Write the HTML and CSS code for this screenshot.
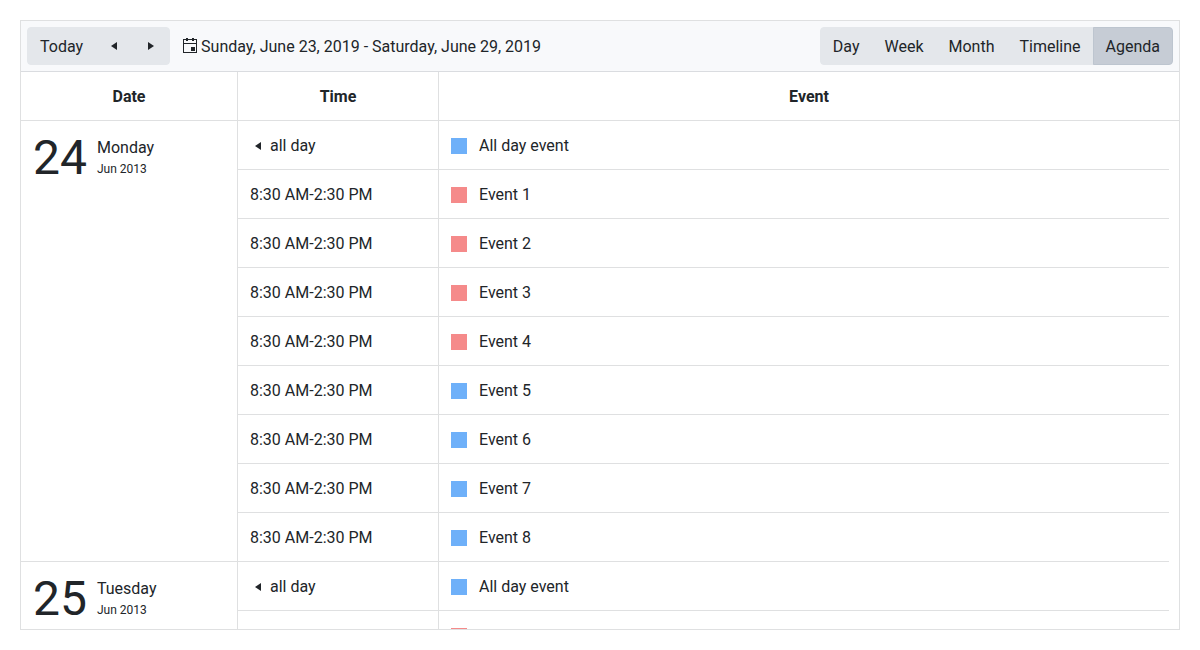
FILE: index.html
```
<!DOCTYPE html>
<html lang="en">
<head>
<meta charset="utf-8">
<title>Scheduler</title>
<link rel="stylesheet" href="styles.css">
</head>
<body>
<main class="scheduler">
  <header class="toolbar">
    <div class="btn-group">
      <button class="btn" type="button">Today</button>
      <button class="btn btn-icon" type="button" aria-label="Previous"><svg class="icon" viewBox="0 0 16 16"><path d="M11 4v8L5 8z"/></svg></button>
      <button class="btn btn-icon" type="button" aria-label="Next"><svg class="icon" viewBox="0 0 16 16"><path d="M5 4v8l6-4z"/></svg></button>
    </div>
    <a class="current-date" href="#"><svg class="icon" viewBox="0 0 16 16"><path fill-rule="evenodd" d="M4 0h2v1h4V0h2v1h3v14H1V1h3zM2 2v3h12V2h-2v1h-2V2H6v1H4V2zM2 6v8h12V6zM9 9h4v4H9z"/></svg><span class="date-range">Sunday, June 23, 2019 - Saturday, June 29, 2019</span></a>
    <div class="btn-group views">
      <button class="btn" type="button">Day</button>
      <button class="btn" type="button">Week</button>
      <button class="btn" type="button">Month</button>
      <button class="btn" type="button">Timeline</button>
      <button class="btn active" type="button" aria-pressed="true">Agenda</button>
    </div>
  </header>
  <table class="agenda agenda-head">
    <colgroup><col class="col-date"><col class="col-time"><col></colgroup>
    <thead><tr><th>Date</th><th>Time</th><th>Event</th></tr></thead>
  </table>
  <div class="agenda-content">
    <table class="agenda">
      <colgroup><col class="col-date"><col class="col-time"><col></colgroup>
      <tbody>
        <tr>
          <td class="date-cell" rowspan="9"><div class="date"><strong class="day">24</strong><div><div class="weekday">Monday</div><div class="month">Jun 2013</div></div></div></td>
          <td><div class="all-day"><svg class="icon" viewBox="0 0 16 16"><path d="M11 4v8L5 8z"/></svg>all day</div></td>
          <td><div class="event"><span class="mark blue"></span>All day event</div></td>
        </tr>
        <tr><td>8:30 AM-2:30 PM</td><td><div class="event"><span class="mark red"></span>Event 1</div></td></tr>
        <tr><td>8:30 AM-2:30 PM</td><td><div class="event"><span class="mark red"></span>Event 2</div></td></tr>
        <tr><td>8:30 AM-2:30 PM</td><td><div class="event"><span class="mark red"></span>Event 3</div></td></tr>
        <tr><td>8:30 AM-2:30 PM</td><td><div class="event"><span class="mark red"></span>Event 4</div></td></tr>
        <tr><td>8:30 AM-2:30 PM</td><td><div class="event"><span class="mark blue"></span>Event 5</div></td></tr>
        <tr><td>8:30 AM-2:30 PM</td><td><div class="event"><span class="mark blue"></span>Event 6</div></td></tr>
        <tr><td>8:30 AM-2:30 PM</td><td><div class="event"><span class="mark blue"></span>Event 7</div></td></tr>
        <tr><td>8:30 AM-2:30 PM</td><td><div class="event"><span class="mark blue"></span>Event 8</div></td></tr>
        <tr>
          <td class="date-cell" rowspan="2"><div class="date"><strong class="day">25</strong><div><div class="weekday">Tuesday</div><div class="month">Jun 2013</div></div></div></td>
          <td><div class="all-day"><svg class="icon" viewBox="0 0 16 16"><path d="M11 4v8L5 8z"/></svg>all day</div></td>
          <td><div class="event"><span class="mark blue"></span>All day event</div></td>
        </tr>
        <tr><td></td><td><div class="event"><span class="mark red"></span></div></td></tr>
      </tbody>
    </table>
  </div>
</main>
</body>
</html>
```
FILE: styles.css
```
* {
  box-sizing: border-box;
}

body {
  margin: 0;
  padding: 20px;
  height: 100vh;
  background: #fff;
  color: #212529;
  font: 16px/24px Roboto, sans-serif;
}

.scheduler {
  display: flex;
  flex-direction: column;
  height: 100%;
  border: 1px solid #dfe0e1;
  overflow: hidden;
}

.toolbar {
  display: flex;
  flex: none;
  align-items: center;
  gap: 12px;
  padding: 6px;
  border-bottom: 1px solid #dadce0;
  background: #f8f9fb;
}

.btn-group {
  display: flex;
}

.views {
  margin-left: auto;
}

.btn {
  padding: 7px 12px 5px;
  border: 1px solid #e4e7eb;
  background: #e4e7eb;
  color: inherit;
  font: inherit;
}

.btn + .btn {
  margin-left: -1px;
}

.btn:first-child {
  border-radius: 4px 0 0 4px;
}

.btn:last-child {
  border-radius: 0 4px 4px 0;
}

.btn.active {
  border-color: #bdc5cf;
  background: #c6ccd5;
}

.btn-icon {
  display: flex;
  align-items: center;
  justify-content: center;
  width: 38px;
  padding: 6px 0;
}

.icon {
  display: block;
  flex: none;
  width: 16px;
  height: 16px;
  fill: currentColor;
}

.current-date {
  display: flex;
  align-items: center;
  gap: 3px;
  color: inherit;
  text-decoration: none;
}

.date-range {
  padding-top: 2px;
}

.agenda {
  width: 100%;
  table-layout: fixed;
  border-collapse: separate;
  border-spacing: 0;
}

.agenda-head {
  flex: none;
}

.agenda-content {
  flex: 1;
  min-height: 0;
  padding-right: 10px;
  overflow: hidden;
}

.col-date {
  width: 217px;
}

.col-time {
  width: 201px;
}

.agenda th,
.agenda td {
  height: 49px;
  padding: 13px 12px 11px;
  border-right: 1px solid #dfe0e1;
  border-bottom: 1px solid #dfe0e1;
}

.agenda th:last-child,
.agenda td:last-child {
  border-right: 0;
}

.agenda th {
  font-weight: 700;
  text-align: center;
}

.agenda .date-cell {
  vertical-align: top;
}

.date {
  display: flex;
  align-items: center;
  gap: 10px;
}

.day {
  font-size: 48px;
  font-weight: 400;
  line-height: 48px;
}

.month {
  padding-bottom: 2px;
  font-size: 12px;
  line-height: 18px;
}

.all-day {
  display: flex;
  align-items: center;
  gap: 4px;
}

.event {
  display: flex;
  align-items: center;
  gap: 12px;
  min-height: 24px;
}

.mark {
  width: 16px;
  height: 16px;
}

.blue {
  background: #6eb0f9;
}

.red {
  background: #f58a8a;
}
```
